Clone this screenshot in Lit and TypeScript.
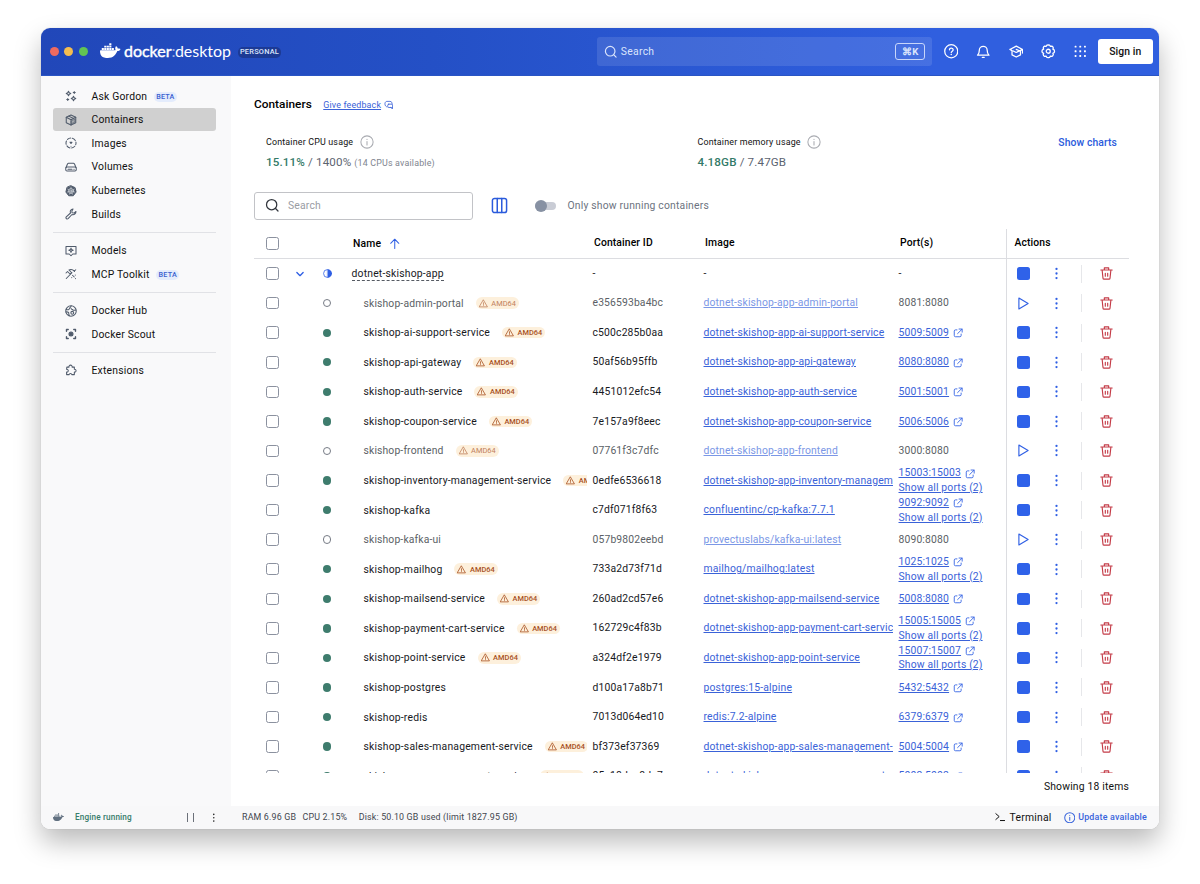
import { LitElement, html, css, svg, nothing } from "lit";
import { customElement } from "lit/decorators.js";
import { classMap } from "lit/directives/class-map.js";

interface Container {
  name: string;
  id: string;
  image: string;
  port: string;
  stopped?: boolean;
  amd?: boolean;
  more?: boolean;
}

const P = "dotnet-skishop-app-";
const CONTAINERS: Container[] = [
  { name: "skishop-admin-portal", id: "e356593ba4bc", image: P + "admin-portal", port: "8081:8080", amd: true, stopped: true },
  { name: "skishop-ai-support-service", id: "c500c285b0aa", image: P + "ai-support-service", port: "5009:5009", amd: true },
  { name: "skishop-api-gateway", id: "50af56b95ffb", image: P + "api-gateway", port: "8080:8080", amd: true },
  { name: "skishop-auth-service", id: "4451012efc54", image: P + "auth-service", port: "5001:5001", amd: true },
  { name: "skishop-coupon-service", id: "7e157a9f8eec", image: P + "coupon-service", port: "5006:5006", amd: true },
  { name: "skishop-frontend", id: "07761f3c7dfc", image: P + "frontend", port: "3000:8080", amd: true, stopped: true },
  { name: "skishop-inventory-management-service", id: "0edfe6536618", image: P + "inventory-management-service", port: "15003:15003", amd: true, more: true },
  { name: "skishop-kafka", id: "c7df071f8f63", image: "confluentinc/cp-kafka:7.7.1", port: "9092:9092", more: true },
  { name: "skishop-kafka-ui", id: "057b9802eebd", image: "provectuslabs/kafka-ui:latest", port: "8090:8080", stopped: true },
  { name: "skishop-mailhog", id: "733a2d73f71d", image: "mailhog/mailhog:latest", port: "1025:1025", amd: true, more: true },
  { name: "skishop-mailsend-service", id: "260ad2cd57e6", image: P + "mailsend-service", port: "5008:8080", amd: true },
  { name: "skishop-payment-cart-service", id: "162729c4f83b", image: P + "payment-cart-service", port: "15005:15005", amd: true, more: true },
  { name: "skishop-point-service", id: "a324df2e1979", image: P + "point-service", port: "15007:15007", amd: true, more: true },
  { name: "skishop-postgres", id: "d100a17a8b71", image: "postgres:15-alpine", port: "5432:5432" },
  { name: "skishop-redis", id: "7013d064ed10", image: "redis:7.2-alpine", port: "6379:6379" },
  { name: "skishop-sales-management-service", id: "bf373ef37369", image: P + "sales-management-service", port: "5004:5004", amd: true },
  { name: "skishop-user-management-service", id: "05c18dec8da7", image: P + "user-management-service", port: "5002:5002", amd: true },
];

const icon = (size: number, body: unknown, box = 24) =>
  html`<svg width=${size} height=${size} viewBox="0 0 ${box} ${box}" fill="none" stroke="currentColor" stroke-width="2.1" stroke-linecap="round" stroke-linejoin="round">${body}</svg>`;

const whale = (w: number) => html`<svg width=${w} height=${w * 0.75} viewBox="0 3 24 18" fill="currentColor"><path d="M13.983 11.078h2.119a.186.186 0 00.186-.185V9.006a.186.186 0 00-.186-.186h-2.119a.185.185 0 00-.185.185v1.888c0 .102.083.185.185.185m-2.954-5.43h2.118a.186.186 0 00.186-.186V3.574a.186.186 0 00-.186-.185h-2.118a.185.185 0 00-.185.185v1.888c0 .102.082.185.185.185m0 2.716h2.118a.187.187 0 00.186-.186V6.29a.186.186 0 00-.186-.185h-2.118a.185.185 0 00-.185.185v1.887c0 .102.082.185.185.186m-2.93 0h2.12a.186.186 0 00.184-.186V6.29a.185.185 0 00-.185-.185H8.1a.185.185 0 00-.185.185v1.887c0 .102.083.185.185.186m-2.964 0h2.119a.186.186 0 00.185-.186V6.29a.185.185 0 00-.185-.185H5.136a.186.186 0 00-.186.185v1.887c0 .102.084.185.186.186m5.893 2.715h2.118a.186.186 0 00.186-.185V9.006a.186.186 0 00-.186-.186h-2.118a.185.185 0 00-.185.185v1.888c0 .102.082.185.185.185m-2.93 0h2.12a.185.185 0 00.184-.185V9.006a.185.185 0 00-.184-.186h-2.12a.185.185 0 00-.184.185v1.888c0 .102.083.185.185.185m-2.964 0h2.119a.185.185 0 00.185-.185V9.006a.185.185 0 00-.184-.186h-2.12a.186.186 0 00-.186.186v1.887c0 .102.084.185.186.185m-2.92 0h2.12a.185.185 0 00.184-.185V9.006a.185.185 0 00-.184-.186h-2.12a.185.185 0 00-.184.185v1.888c0 .102.082.185.185.185M23.763 9.89c-.065-.051-.672-.51-1.954-.51-.338.001-.676.03-1.01.087-.248-1.7-1.653-2.53-1.716-2.566l-.344-.199-.226.327c-.284.438-.49.922-.612 1.43-.23.97-.09 1.882.403 2.661-.595.332-1.55.413-1.744.42H.751a.751.751 0 00-.75.748 11.376 11.376 0 00.692 4.062c.545 1.428 1.355 2.48 2.41 3.124 1.18.723 3.1 1.137 5.275 1.137.983.003 1.963-.086 2.93-.266a12.248 12.248 0 003.823-1.389c.98-.567 1.86-1.288 2.61-2.136 1.252-1.418 1.998-2.997 2.553-4.4h.221c1.372 0 2.215-.549 2.68-1.009.309-.293.55-.65.707-1.046l.098-.288Z"/></svg>`;

const I = {
  search: svg`<circle cx="11" cy="11" r="8.500"/><path d="M17.500 17.500l4 4"/>`,
  help: svg`<circle cx="12" cy="12" r="10.800"/><path d="M9 9.600c.2-4 6.200-3.600 6.200.1 0 2.200-3.100 2.300-3.200 4.500"/><path d="M12 17.300v.1" stroke-width="2.600"/>`,
  bell: svg`<path d="M2.500 18.500h19c-2.600-2-3-4.500-3-8a6.500 6.500 0 0 0-13 0c0 3.500-.4 6-3 8z"/><path d="M10.500 22.300h3"/>`,
  learn: svg`<path d="M1.500 9L12 3.500 22.500 9v6M1.500 9l3.500 2M22.500 9L12 14 7 11.500M5 11v7l7 3.500 7-3.500v-7M12 9l7 3"/>`,
  gear: svg`<circle cx="12" cy="12" r="3.300"/><path d="M12.00 1.60L14.40 2.00L15.60 4.00L17.90 3.50L19.50 4.70L20.40 6.50L19.60 8.60L21.80 9.70L22.40 12.00L21.80 14.30L19.60 15.40L20.40 17.50L19.50 19.30L17.90 20.50L15.60 20.00L14.40 22.00L12.00 22.40L9.60 22.00L8.40 20.00L6.10 20.50L4.50 19.30L3.60 17.50L4.40 15.40L2.20 14.30L1.60 12.00L2.20 9.70L4.40 8.60L3.60 6.50L4.50 4.70L6.10 3.50L8.40 4.00L9.60 2.00Z"/>`,
  grid: svg`${[3, 12, 21].map((y) => [3, 12, 21].map((x) => svg`<rect x=${x - 1.8} y=${y - 1.8} width="3.600" height="3.600" rx="1" fill="currentColor" stroke="none"/>`))}`,
  gordon: svg`<path d="M7 2.500L8.500 5.500 11.500 7 8.500 8.500 7 11.500 5.500 8.500 2.500 7 5.500 5.500zM17 12.500l1.500 3 3 1.500-3 1.500-1.500 3-1.500-3-3-1.500 3-1.500z"/><path d="M18.500 3v4M16.500 5h4M5.500 17v4M3.500 19h4"/>`,
  cube: svg`<path d="M12 2l9.500 4.500v11L12 22l-9.500-4.500v-11z"/><path d="M2.500 6.500L12 11.500l9.500-5M12 11.500V22M7.500 4.300l9.500 4.700"/><path d="M13 13.500l7-3.500v6l-7 3.500z" fill="currentColor" fill-opacity=".35" stroke-width="1.300"/>`,
  images: svg`<circle cx="12" cy="12" r="10" stroke-dasharray="7 3.470" stroke-dashoffset="3.500"/><path d="M10 10.500h4L12 13z" fill="currentColor"/><path d="M12 18.500v.1"/>`,
  drive: svg`<path d="M2 13l3-7c.4-1 1-1.500 2-1.500h10c1 0 1.600.5 2 1.500l3 7"/><rect x="1.500" y="12" width="21" height="8" rx="2.500"/><path d="M6 16.300h8M17.800 16.300h.5"/>`,
  kube: svg`<path d="M12 1.500l8.200 3.800 2 8.800-5.700 7.400h-9L1.800 14.100l2-8.800z" fill="currentColor" stroke-width="2"/><g stroke="#dfe2e8" stroke-width="1.200"><circle cx="12" cy="12" r="5"/><circle cx="12" cy="12" r="1"/><path d="M12 4.500v5M5.500 8.500l4.500 2.500M18.500 8.500L14 11M4.800 14l5-1.200M19.200 14l-5-1.200M9 18.500l2-4M15 18.500l-2-4"/></g>`,
  wrench: svg`<path d="M16 2c-4 .3-6.500 4-5 8L2.600 17.800c-2 2.300 1.300 5.500 3.600 3.600L14 13c4 1.500 8-1.500 8-6l-3.500 3L14 9.500 13.800 6z"/>`,
  models: svg`<path d="M2 3h20v15h-6.500L12 21.500 8.500 18H2z"/><path d="M12 6.200l1.200 3L16.300 10.500l-3.100 1.200L12 14.800l-1.200-3.100L7.700 10.500l3.100-1.300z"/>`,
  mcp: svg`<path d="M2.500 21L14 9.500M8 4c4-2 9-.5 11 3M8 4l5 5-3 3-5-5-3 3M15 14.500l3.500 3.500M20.500 14v.2M13.500 19v.2M21 21v.2M21.500 3.500l-3 3"/>`,
  hub: svg`<circle cx="12" cy="12" r="10.500"/><path d="M2.500 9c3.500 1.500 6 .5 6.500-2.500l3.500-4.500M12 6.500c.5 2.500 3 2 4 3.500s3.500.5 5.500 0M2 14c3.500-1 6.500 1 5.500 4l1 3.500"/><circle cx="14.500" cy="15.500" r="2.800"/>`,
  scout: svg`<circle cx="12" cy="12" r="4" fill="currentColor"/><path d="M3 6.500V3h3.500M17.500 3H21v3.500M21 17.500V21h-3.500M6.500 21H3v-3.500" stroke-width="2.800"/>`,
  puzzle: svg`<path d="M4.500 6.500h4.300a3.200 3.200 0 1 1 6.200 0h4.500v4.300a2.900 2.900 0 1 1 0 5.700v5h-5a2.800 2.800 0 0 0-5.500 0h-5v-5a2.800 2.800 0 1 0 0-5.500z" transform="translate(-.8 -.3)"/>`,
  info: svg`<circle cx="12" cy="12" r="10.500"/><path d="M12 11v6M12 7.300v.2"/>`,
  external: svg`<path d="M9.500 4.500H6a3 3 0 0 0-3 3V18a3 3 0 0 0 3 3h10.500a3 3 0 0 0 3-3v-3.500M14.500 2.500H22V10M21.500 3L11 13.500"/>`,
  feedback: svg`<path d="M7.500 17.500C.5 16.500.5 3.500 7.500 3.500H15c4.500 0 6 3.500 5.500 7"/><rect x="9.500" y="10.500" width="12" height="8.500" rx="2.500"/><path d="M17 19l4.500 3.500V18"/>`,
  columns: svg`<rect x="2" y="2" width="20" height="20" rx="3"/><path d="M8.800 2v20M15.200 2v20"/>`,
  up: svg`<path d="M12 22V3M3.500 11L12 2.500 20.500 11"/>`,
  down: svg`<path d="M4.500 8.500L12 16l7.500-7.500" stroke-width="3.200"/>`,
  half: svg`<circle cx="12" cy="12" r="10.500"/><path d="M12.500 2a10 10 0 0 1 0 20z" fill="currentColor" stroke-width="1"/>`,
  warn: svg`<path d="M12 3L22.500 21h-21z"/><path d="M12 10v4.500M12 17.800v.1"/>`,
  play: svg`<path d="M3.500 2L20.500 12 3.500 22z"/>`,
  trash: svg`<path d="M1.500 5.500h21M8 5V1.500h8V5M4 6.500l1.500 14c.1 1.200.8 2 1.900 2h9.200c1.100 0 1.800-.8 1.900-2L20 6.500M9.800 11.500v5.500M14.200 11.500v5.500" stroke-width="2.100"/>`,
  dots: svg`<g fill="currentColor" stroke="none"><circle cx="12" cy="3.500" r="2.100"/><circle cx="12" cy="12" r="2.100"/><circle cx="12" cy="20.500" r="2.100"/></g>`,
};

interface NavItem { label: string; glyph: unknown; beta?: boolean; active?: boolean }
const NAV: NavItem[][] = [
  [
    { label: "Ask Gordon", glyph: I.gordon, beta: true },
    { label: "Containers", glyph: I.cube, active: true },
    { label: "Images", glyph: I.images },
    { label: "Volumes", glyph: I.drive },
    { label: "Kubernetes", glyph: I.kube },
    { label: "Builds", glyph: I.wrench },
  ],
  [
    { label: "Models", glyph: I.models },
    { label: "MCP Toolkit", glyph: I.mcp, beta: true },
  ],
  [
    { label: "Docker Hub", glyph: I.hub },
    { label: "Docker Scout", glyph: I.scout },
  ],
  [{ label: "Extensions", glyph: I.puzzle }],
];

@customElement("app-root")
class AppRoot extends LitElement {
  static styles = css`
    :host { display: block; box-sizing: border-box; height: 884px; padding: 28px 41px 55px; background: #fff; overflow: hidden;
      font-family: Roboto, "Liberation Sans", sans-serif; font-size: 10.36px; letter-spacing: .165px; color: #17191e; }
    * { box-sizing: border-box; }
    svg { display: block; flex: none; }
    .window { height: 801px; display: flex; flex-direction: column; border-radius: 9px; overflow: hidden; background: #fff; }
    .shadow { border-radius: 9px; box-shadow: 0 0 1px rgba(0,0,0,.25), 0 13px 27px rgba(0,0,0,.27); }
    header { height: 47.500px; flex: none; display: flex; align-items: center; padding: 0 6.500px 0 8.500px; color: #fff;
      background: linear-gradient(90deg, #2147b9, #2450c6 35%, #305fdf 80%); border-bottom: 1px solid #2a55c4; }
    .lights { display: flex; gap: 5.700px; width: 50.500px; margin-top: 1px; }
    .light { width: 9px; height: 9px; border-radius: 50%; background: #ee6a5f; }
    .light.y { background: #f5bd4f; } .light.g { background: #61c454; }
    .brand { display: flex; align-items: center; font-family: Lato, sans-serif; font-size: 16px; line-height: 20px; letter-spacing: -.03px; }
    .brand svg { margin: -1px 3.500px 0 0; }
    .brand b { font-weight: 400; -webkit-text-stroke: .4px #fff; }
    .brand i { font-style: normal; opacity: .55; margin: 0 -.5px 0 0; }
    .plan { margin-left: 7px; padding: 0 2px; border-radius: 5px; background: #1c3a94; font-size: 7.400px; line-height: 10.500px; margin-top: 2px; font-weight: 500; letter-spacing: .22px; color: #dfe7fb; }
    .find { margin-left: auto; width: 335px; height: 29.500px; border-radius: 3px; background: rgba(255,255,255,.11); display: flex; align-items: center; padding: 0 6.500px 0 7px; gap: 3.500px; color: #dbe5fc; letter-spacing: .3px; }
    .kbd { margin-left: auto; width: 30px; height: 17px; border: 1px solid #c8d6fa; border-radius: 3px; font-size: 9.600px; line-height: 15px; text-align: center; font-weight: 700; letter-spacing: .2px; }
    .tools { display: flex; align-items: center; gap: 17.900px; margin: 0 12px 0 12.200px; }
    .tools svg:last-child { width: 12.500px; height: 12.500px; }
    .signin { width: 54.500px; height: 24.500px; border-radius: 3px; background: #fff; color: #111; font-weight: 500; line-height: 26px; text-align: center; letter-spacing: .1px; }
    .body { flex: 1; display: flex; min-height: 0; }
    nav { width: 190px; flex: none; background: #f9f9fa; padding: 8.700px 15.500px 0 12px; }
    .group + .group { border-top: 1px solid #e1e2e6; margin-top: 6px; padding-top: 5.700px; }
    .item { height: 23.650px; display: flex; align-items: center; padding-left: 12px; border-radius: 3px; color: #111; letter-spacing: .2px; }
    .item svg { color: #505b6b; margin-right: 14.500px; }
    .item.active { background: #d0d0d0; }
    .beta { margin-left: 6.500px; padding: 0 2.500px; border-radius: 5px; background: #e4ecfc; color: #3a60cf; font-weight: 500; font-size: 7.200px; line-height: 10px; letter-spacing: .2px; margin-top: 1px; }
    main { flex: 1; min-width: 0; padding: 20px 30px 0 23px; display: flex; flex-direction: column; }
    .title { display: flex; height: 16px; align-items: center; flex: none; }
    h1 { margin: 0; font-size: 11.840px; font-weight: 500; letter-spacing: .02px; color: #000; }
    a { color: #3a62d8; text-decoration: underline; text-underline-offset: 1px; }
    .title a { margin: 2px 3px 0 11.500px; font-size: 8.880px; letter-spacing: .16px; }
    .title svg { margin-top: 2px; color: #3a62d8; }
    .stats { display: flex; flex: none; margin-top: 22px; padding: 0 12px; height: 38px; }
    .stat { width: 431.500px; flex: none; }
    .stat + .stat { width: auto; }
    .label { display: flex; align-items: center; height: 16px; gap: 6.500px; font-size: 8.880px; letter-spacing: .18px; color: #111; }
    .label svg { color: #a9abb1; stroke-width: 1.800px; }
    .value { height: 17px; margin-top: 4.500px; line-height: 17px; font-size: 11.600px; letter-spacing: .15px; color: #5c6370; }
    .value b { font-weight: 500; color: #337a68; }
    .value small { font-size: 8.880px; letter-spacing: .18px; color: #80858f; }
    .charts { margin-left: auto; line-height: 17px; font-weight: 500; color: #2b5bdc; letter-spacing: .1px; white-space: nowrap; }
    .bar { display: flex; align-items: center; flex: none; height: 28px; margin-top: 20px; color: #6c7380; letter-spacing: .19px; }
    .box { width: 219px; height: 28px; border: 1px solid #c2c3c7; border-radius: 3px; display: flex; align-items: center; gap: 8.500px; padding-left: 10px; color: #999ca3; }
    .box svg { color: #33373e; }
    .bar > svg { margin: 0 26.500px 0 18px; color: #2b5bdc; }
    .switch { width: 21.500px; height: 8px; border-radius: 4px; background: #c9ccd5; display: flex; align-items: center; margin-right: 11.500px; }
    .knob { width: 12px; height: 12px; border-radius: 50%; background: #8791a3; flex: none; }
    .table { height: 543.500px; flex: none; overflow: hidden; margin-top: 9.500px; }
    .row { display: grid; grid-template-columns: 37px 18px 36px 242px 111px 195px 113px 123px; height: 29.570px; align-items: center; }
    .row > .c { display: flex; justify-content: center; }
    .name { display: flex; align-items: center; padding-left: 18.500px; white-space: nowrap; overflow: hidden; letter-spacing: .2px; }
    .name.root { padding-left: 6.500px; overflow: visible; }
    .root span { border-bottom: 1px dashed #555a63; line-height: 13.500px; margin-top: 1px; }
    .cell { padding: 1px 0 0 5.500px; white-space: nowrap; overflow: hidden; line-height: 14.700px; }
    .image { color: #3a62d8; letter-spacing: .185px; }
    .port { display: flex; align-items: center; gap: 4px; }
    .head { font-weight: 500; border-bottom: 1px solid #dcdde1; color: #000; letter-spacing: .12px; height: 29.500px; margin-bottom: .300px; }
    .head .cell { padding-left: 7px; }
    .head .name { padding-left: 8px; gap: 8px; }
    .head .name svg, .blue { color: #2f5fe4; }
    .check { width: 12.500px; height: 12.500px; border: 1.400px solid #8b919f; border-radius: 2.500px; }
    .dot { width: 8.400px; height: 8.400px; border-radius: 50%; background: #3e7c6d; }
    .off .dot { background: #fff; border: 1px solid #777c86; }
    .off .name, .off .cell { color: #5b5f66; letter-spacing: .14px; }
    .off .image a { color: #7b97e6; }
    .badge { display: flex; align-items: center; gap: 3.500px; margin-left: 12px; padding: 0 3px; border-radius: 6px; height: 11.500px; background: #fdf0dc; color: #a8501f; font-size: 7.400px; font-weight: 500; letter-spacing: .05px; }
    .off .badge { color: #bf7f5b; font-weight: 400; }
    .acts { height: 100%; border-left: 1px solid #dcdde1; display: grid; grid-template-columns: 33px 32px 19px 31.500px; align-items: center; justify-items: center; color: #2f5fe4; }
    .head .acts { display: block; line-height: 28.500px; padding-left: 7.500px; color: #000; }
    .stop { width: 12.500px; height: 12.500px; border-radius: 2.500px; background: #2f62e9; }
    .sep { width: 1px; height: 18px; background: #e6e7ea; }
    .trash { color: #c43b47; }
    .count { text-align: right; margin-top: 6px; line-height: 16px; letter-spacing: .18px; color: #111; font-size: 10.360px; }
    footer { height: 23.500px; flex: none; background: #f8f8f9; display: flex; align-items: center; padding: 0 12px 0 12px; font-size: 8.880px; color: #42464e; }
    .engine { width: 189px; display: flex; align-items: center; color: #617080; }
    .engine span { margin-left: 11px; color: #377c6b; font-weight: 500; font-size: 8.200px; letter-spacing: .15px; }
    .pause { margin-left: auto; width: 7px; height: 9px; border: solid #6b7079; border-width: 0 1px; }
    .engine .more { margin: 0 23.500px 0 15px; color: #333; }
    .gap { margin-left: 6.500px; } .gap2 { margin-left: 11.500px; }
    .term { display: flex; align-items: center; gap: 4px; margin-left: auto; font-size: 10.360px; color: #111; letter-spacing: .25px; }
    .update { display: flex; align-items: center; gap: 3px; margin-left: 12px; color: #3864dc; font-weight: 500; letter-spacing: .2px; }
  `;

  private renderRow(c: Container) {
    return html`<div class=${classMap({ row: true, off: !!c.stopped })}>
      <div class="c"><div class="check"></div></div><div></div>
      <div class="c"><div class="dot"></div></div>
      <div class="name"><span>${c.name}</span>${c.amd ? html`<div class="badge">${icon(9, I.warn)}AMD64</div>` : nothing}</div>
      <div class="cell">${c.id}</div>
      <div class="cell image"><a>${c.image}</a></div>
      <div class="cell">
        ${c.stopped ? c.port : html`<div class="port"><a>${c.port}</a><span class="blue">${icon(10, I.external)}</span></div>`}
        ${c.more ? html`<div><a>Show all ports (2)</a></div>` : nothing}
      </div>
      ${this.renderActions(!!c.stopped)}
    </div>`;
  }

  private renderActions(stopped: boolean) {
    return html`<div class="acts">
      ${stopped ? icon(13, I.play) : html`<div class="stop"></div>`}
      ${icon(13, I.dots)}
      <div class="sep"></div>
      <div class="trash">${icon(13, I.trash)}</div>
    </div>`;
  }

  render() {
    return html`<div class="shadow"><div class="window">
      <header>
        <div class="lights"><div class="light"></div><div class="light y"></div><div class="light g"></div></div>
        <div class="brand">${whale(20.5)}<b>docker</b><i>:</i><span>desktop</span></div>
        <div class="plan">PERSONAL</div>
        <div class="find">${icon(13.5, I.search)}<span>Search</span><div class="kbd">⌘K</div></div>
        <div class="tools">${[I.help, I.bell, I.learn, I.gear, I.grid].map((g) => icon(14.5, g))}</div>
        <div class="signin">Sign in</div>
      </header>
      <div class="body">
        <nav>${NAV.map((g) => html`<div class="group">${g.map((n) => html`<div class=${classMap({ item: true, active: !!n.active })}>
          ${icon(12, n.glyph)}<span>${n.label}</span>${n.beta ? html`<div class="beta">BETA</div>` : nothing}</div>`)}</div>`)}</nav>
        <main>
          <div class="title"><h1>Containers</h1><a>Give feedback</a>${icon(9.5, I.feedback)}</div>
          <div class="stats">
            <div class="stat"><div class="label">Container CPU usage ${icon(14, I.info)}</div>
              <div class="value"><b>15.11%</b> / 1400% <small>(14 CPUs available)</small></div></div>
            <div class="stat"><div class="label">Container memory usage ${icon(14, I.info)}</div>
              <div class="value"><b>4.18GB</b> / 7.47GB</div></div>
            <div class="charts">Show charts</div>
          </div>
          <div class="bar">
            <div class="box">${icon(14.5, I.search)}<span>Search</span></div>
            ${icon(17, I.columns)}
            <div class="switch"><div class="knob"></div></div>
            <span>Only show running containers</span>
          </div>
          <div class="table">
            <div class="row head">
              <div class="c"><div class="check"></div></div><div></div><div></div>
              <div class="name">Name ${icon(11.5, I.up)}</div>
              <div class="cell">Container ID</div><div class="cell">Image</div><div class="cell">Port(s)</div>
              <div class="acts">Actions</div>
            </div>
            <div class="row">
              <div class="c"><div class="check"></div></div>
              <div class="c blue">${icon(10, I.down)}</div>
              <div class="c blue">${icon(9, I.half)}</div>
              <div class="name root"><span>dotnet-skishop-app</span></div>
              <div class="cell">-</div><div class="cell">-</div><div class="cell">-</div>
              ${this.renderActions(false)}
            </div>
            ${CONTAINERS.map((c) => this.renderRow(c))}
          </div>
          <div class="count">Showing 18 items</div>
        </main>
      </div>
      <footer>
        <div class="engine">${whale(11)}<span>Engine running</span><div class="pause"></div><div class="more">${icon(9.5, I.dots)}</div></div>
        <div>RAM 6.96 GB</div><div class="gap">CPU 2.15%</div><div class="gap2">Disk: 50.10 GB used (limit 1827.95 GB)</div>
        <div class="term">${icon(10, svg`<path d="M2 4l8 7-8 7M13 20.500h10" stroke-width="2.400"/>`)}Terminal</div>
        <div class="update">${icon(11.5, I.info)}Update available</div>
      </footer>
    </div></div>`;
  }
}
